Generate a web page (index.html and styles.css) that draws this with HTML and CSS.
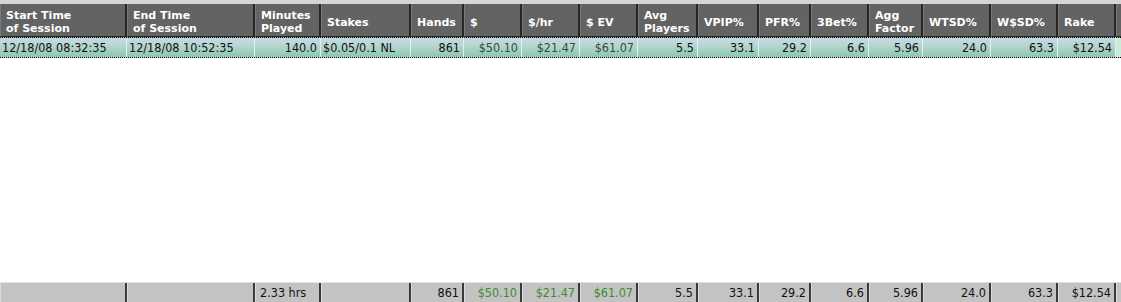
FILE: index.html
```html
<!DOCTYPE html>
<html>
<head>
<meta charset="utf-8">
<link rel="stylesheet" href="styles.css">
</head>
<body>
<div class="grid">
  <div class="topstrip"></div>
  <div class="row head">
    <div class="c">Start Time<br>of Session</div>
    <div class="c">End Time<br>of Session</div>
    <div class="c">Minutes<br>Played</div>
    <div class="c">Stakes</div>
    <div class="c">Hands</div>
    <div class="c">$</div>
    <div class="c">$/hr</div>
    <div class="c">$ EV</div>
    <div class="c">Avg<br>Players</div>
    <div class="c">VPIP%</div>
    <div class="c">PFR%</div>
    <div class="c">3Bet%</div>
    <div class="c">Agg<br>Factor</div>
    <div class="c">WTSD%</div>
    <div class="c">W$SD%</div>
    <div class="c">Rake</div>
    <div class="c"></div>
  </div>
  <div class="row data">
    <div class="c l">12/18/08 08:32:35</div>
    <div class="c l">12/18/08 10:52:35</div>
    <div class="c">140.0</div>
    <div class="c l">$0.05/0.1 NL</div>
    <div class="c">861</div>
    <div class="c money">$50.10</div>
    <div class="c money">$21.47</div>
    <div class="c money">$61.07</div>
    <div class="c">5.5</div>
    <div class="c">33.1</div>
    <div class="c">29.2</div>
    <div class="c">6.6</div>
    <div class="c">5.96</div>
    <div class="c">24.0</div>
    <div class="c">63.3</div>
    <div class="c">$12.54</div>
    <div class="c end"></div>
  </div>
  <div class="blank"></div>
  <div class="row foot">
    <div class="c"></div>
    <div class="c"></div>
    <div class="c l">2.33 hrs</div>
    <div class="c"></div>
    <div class="c">861</div>
    <div class="c money">$50.10</div>
    <div class="c money">$21.47</div>
    <div class="c money">$61.07</div>
    <div class="c">5.5</div>
    <div class="c">33.1</div>
    <div class="c">29.2</div>
    <div class="c">6.6</div>
    <div class="c">5.96</div>
    <div class="c">24.0</div>
    <div class="c">63.3</div>
    <div class="c">$12.54</div>
    <div class="c"></div>
  </div>
</div>
</body>
</html>
```
FILE: styles.css
```css
html, body {
  margin: 0;
  padding: 0;
  background: #ffffff;
}
.grid {
  width: 1121px;
  height: 302px;
  display: flex;
  flex-direction: column;
  overflow: hidden;
}
.topstrip {
  height: 4px;
  background: #d6d6d6;
  flex: none;
}
.row {
  display: grid;
  grid-template-columns: 127px 128px 66px 90px 53px 58px 58px 58px 60px 61px 52px 58px 54px 68px 67px 58px 5px;
  flex: none;
}
.c {
  box-sizing: border-box;
  overflow: hidden;
  white-space: nowrap;
}
.head {
  height: 33px;
  background: #636363;
}
.head .c {
  display: flex;
  align-items: center;
  padding: 4px 0 0 5px;
  font-family: "DejaVu Sans", Verdana, sans-serif;
  font-weight: bold;
  font-size: 11px;
  line-height: 13px;
  color: #ffffff;
  border-left: 1px solid #7a7a7a;
  border-right: 2px solid #262626;
  border-bottom: 1px solid #262626;
}
.data {
  height: 21px;
  background: linear-gradient(#c9d9e2 0%, #b6d6d2 40%, #8cc6b0 100%);
  border-top: 1px dotted #000;
  border-bottom: 1px dotted #000;
  box-sizing: border-box;
}
.data .c, .foot .c {
  font-family: "DejaVu Sans Condensed", "DejaVu Sans", sans-serif;
  font-size: 12.5px;
  line-height: 19px;
  color: #111;
  text-align: right;
  padding: 0 3px 0 2px;
}
.data .c {
  border-right: 1px solid #e4eeee;
}
.data .c.l, .foot .c.l {
  text-align: left;
}
.data .money {
  color: #344f34;
}
.data .end {
  border-right: none;
  background: #c8ecd8;
}
.blank {
  flex: 1;
  background: #ffffff;
}
.foot {
  height: 20px;
  background: #c3c3c3;
  border-top: 1px solid #e2e2e2;
  box-sizing: border-box;
}
.foot .c {
  border-right: 2px solid #3a3a3a;
  border-left: 1px solid #dcdcdc;
  line-height: 19px;
}
.foot .c.l {
  padding-left: 4px;
}
.foot .money {
  color: #3f8a2e;
}
```
